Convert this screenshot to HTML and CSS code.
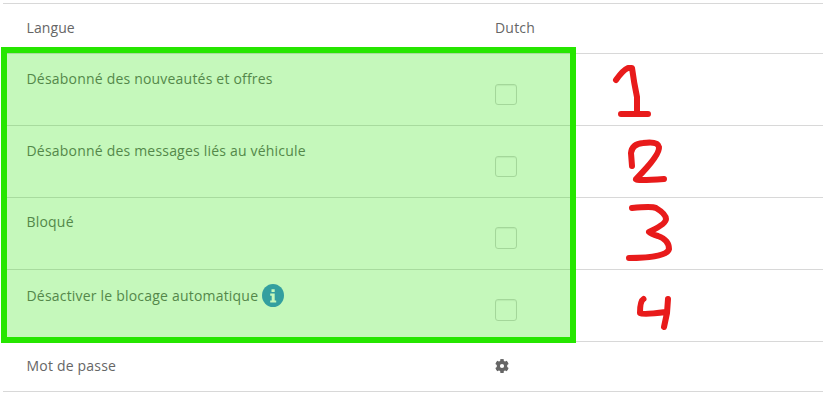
FILE: index.html
```html
<!DOCTYPE html>
<html lang="fr">
<head>
<meta charset="utf-8">
<title>Langue</title>
<link rel="stylesheet" href="styles.css">
</head>
<body>
<main class="settings">
  <div class="row"><span class="label tight">Langue</span><span class="value">Dutch</span></div>
  <div class="row tall"><span class="label">Désabonné des nouveautés et offres</span><span class="value"><i class="check short"></i></span></div>
  <div class="row tall"><span class="label">Désabonné des messages liés au véhicule</span><span class="value"><i class="check short"></i></span></div>
  <div class="row tall raised"><span class="label">Bloqué</span><span class="value"><i class="check"></i></span></div>
  <div class="row tall with-info"><span class="label">Désactiver le blocage automatique
    <svg class="info" viewBox="0 0 22 23"><ellipse cx="11" cy="11.5" rx="11" ry="11.5" fill="#3986d9"/><path d="M9.500 5.200h3.200v2.900H9.500zM8.200 9.600h4.500v6.800h1.500v2.200H8.200v-2.200h1.500v-4.600H8.200z" fill="#fff"/></svg></span><span class="value"><i class="check"></i></span></div>
  <div class="row"><span class="label">Mot de passe</span><span class="value"><svg class="gear" viewBox="0 0 14 14"><path fill="#666" fill-rule="evenodd" d="M5.200.3Q7-.2 8.800.3V1.900L10.100 2.600 11.700 1.700Q13 3 13.600 4.900L12.200 5.900V8.100L13.600 9.100Q13 11 11.700 12.300L10.100 11.400 8.800 12.100V13.700Q7 14.200 5.200 13.700V12.100L3.900 11.400 2.300 12.300Q1 11 .4 9.100L1.800 8.100V5.900L.4 4.900Q1 3 2.300 1.700L3.900 2.600 5.200 1.900zM7 4.900a2.100 2.100 0 1 0 0 4.200 2.100 2.100 0 0 0 0-4.200z"/></svg></span></div>
</main>
<div class="highlight"></div>
<svg class="marks" viewBox="600 50 100 290">
  <path d="M616 80Q623 70 628 68L632 68Q634 83 637 97L637 111M621 114H648"/>
  <path d="M632 166L631 153Q632 144 643 143Q658 141 659 147Q660 155 636 179Q635 181 664 179"/>
  <path d="M632 208Q652 206 656 208Q666 214 666 219Q666 224 649 232Q651 234 658 236Q669 240 669 249Q667 258 629 258"/>
  <path d="M643.500 299Q640 301 640 313Q643 315 666 312M668 299L667 313L664 327"/>
</svg>
</body>
</html>
```
FILE: styles.css
```css
* { box-sizing: border-box; }
body {
  margin: 0;
  height: 406px;
  overflow: hidden;
  background: #fff;
  color: #666;
  font: 14px/20px "Open Sans", sans-serif;
  letter-spacing: .2px;
}
.settings {
  margin: 3px 0 0 3px;
  border-top: 1px solid #d8d8d8;
}
.row {
  display: grid;
  grid-template-columns: 468.5px 1fr;
  height: 50px;
  padding: 14px 0 0 23.5px;
  border-bottom: 1px solid #d8d8d8;
}
.tall { height: 72px; padding-top: 15px; }
.raised { padding-top: 14px; }
.label { white-space: nowrap; }
.tight { letter-spacing: .1px; }
.check {
  display: block;
  width: 22px;
  height: 22px;
  margin-top: 15px;
  border: 1px solid #d3d3d3;
  border-radius: 3px;
  box-shadow: inset 0 1px 1px #eee;
}
.check.short { height: 21px; }
.with-info { padding-top: 14px; }
.with-info .label {
  display: flex;
  align-items: center;
  gap: 3.5px;
  height: 23px;
}
.info { width: 22px; height: 23px; }
.gear { display: block; width: 14px; height: 14px; margin-top: 3px; }
.highlight {
  position: absolute;
  left: 1px;
  top: 47px;
  width: 575px;
  height: 296px;
  border: 6px solid #26e600;
  background: rgba(38, 230, 0, .267);
  background-clip: padding-box;
}
.marks {
  position: absolute;
  left: 600px;
  top: 50px;
  width: 100px;
  height: 290px;
  fill: none;
  stroke: #e81b1b;
  stroke-width: 6;
  stroke-linecap: round;
  stroke-linejoin: round;
}
```
